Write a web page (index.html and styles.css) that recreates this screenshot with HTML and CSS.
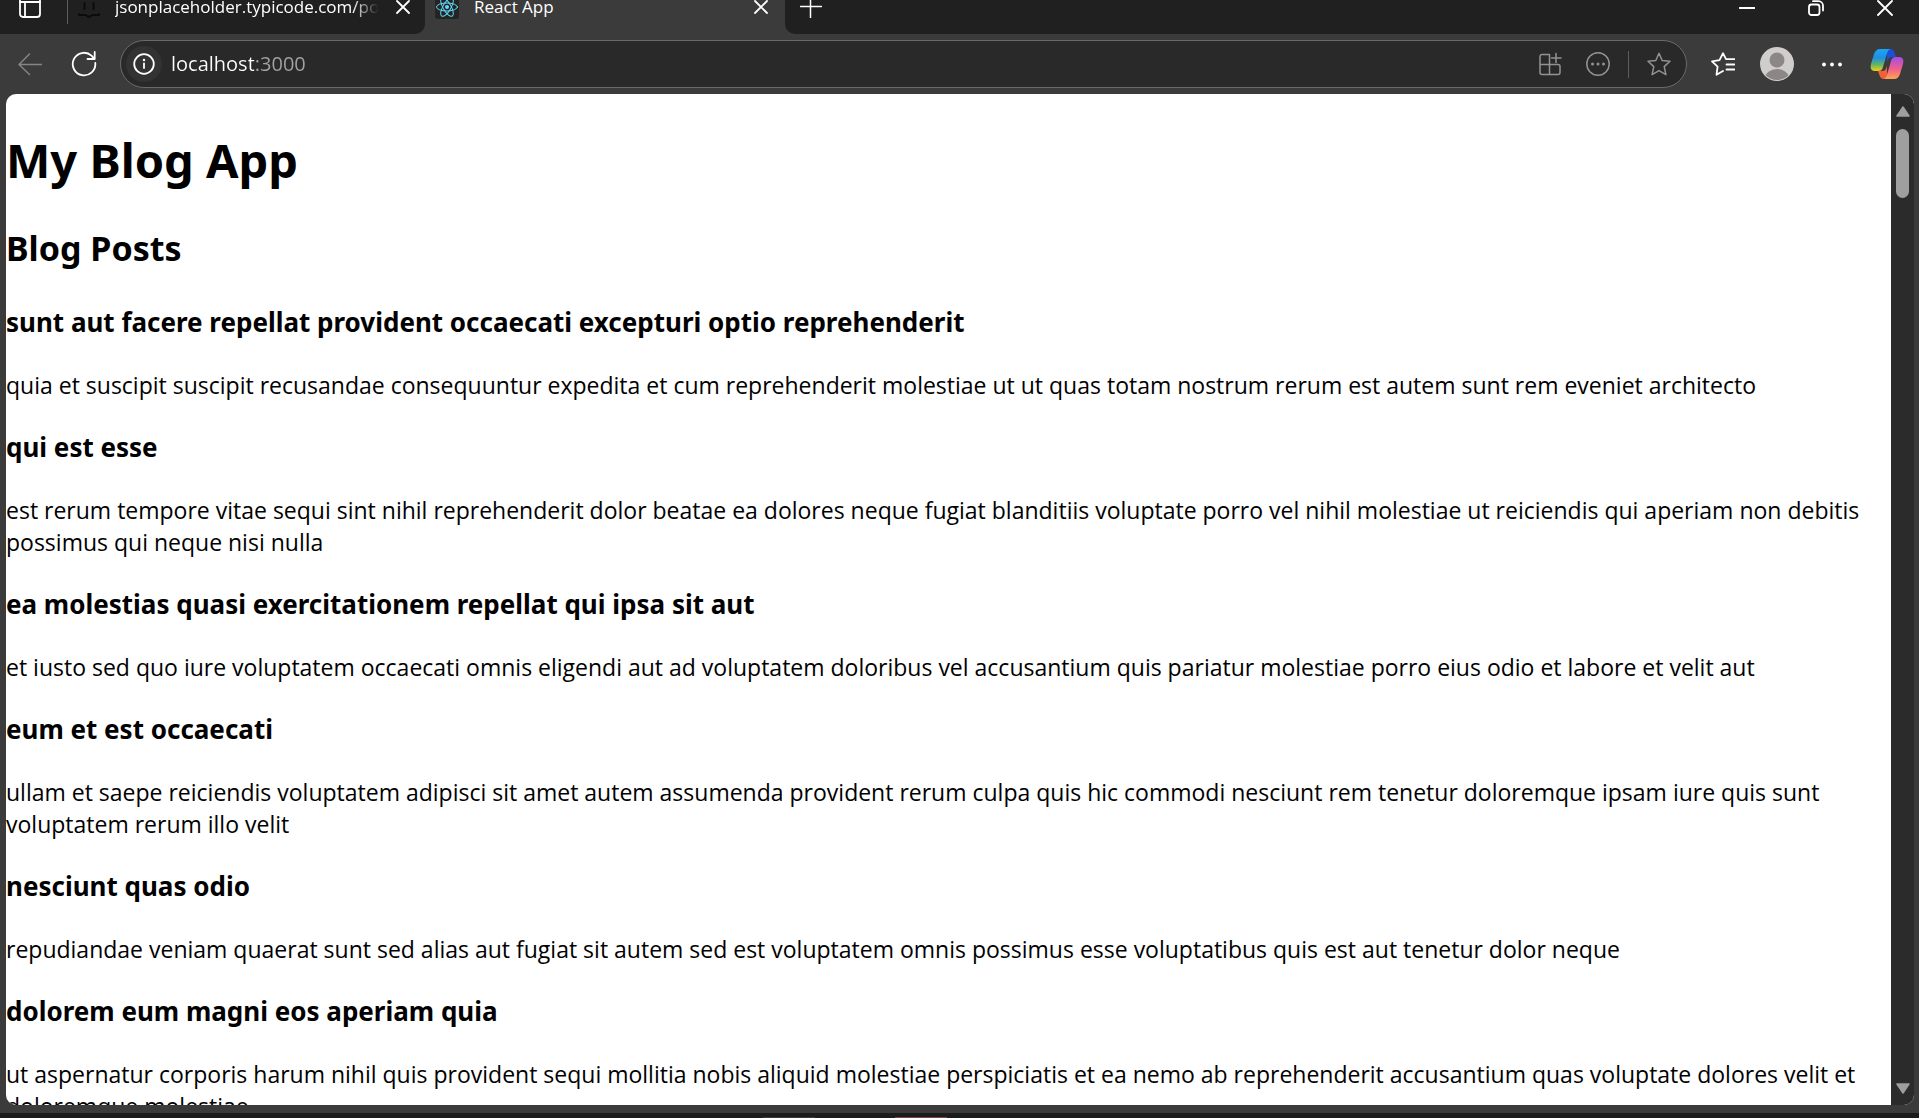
FILE: index.html
```html
<!DOCTYPE html>
<html lang="en">
<head>
<meta charset="utf-8">
<title>React App</title>
<link rel="stylesheet" href="styles.css">
</head>
<body>
<header class="tab-strip">
  <div class="strip-left">
    <button class="icon-button tab-menu" aria-label="Tab actions">
      <svg width="22" height="22" viewBox="0 0 22 22"><rect class="bold" x="1" y="1" width="20" height="20" rx="3"/><path class="bold" d="M1 6H21M6 6V21"/></svg>
    </button>
    <div class="tab tab-idle">
      <svg class="favicon" width="22" height="22" viewBox="0 0 22 22"><path class="face" d="M1 3v-2h5M16 1h5v2M6.500 7v6M15.500 7v6M1 18v1h7M9 20l2 1 2-1M14 19h7v-1"/></svg>
      <span class="tab-title tab-title-fade">jsonplaceholder.typicode.com/posts</span>
      <button class="icon-button tab-close" aria-label="Close tab">
        <svg width="14" height="14" viewBox="0 0 14 14"><path class="bold" d="M1 1 13 13M13 1 1 13"/></svg>
      </button>
    </div>
  </div>
  <div class="tab tab-active">
    <svg class="favicon react" width="24" height="24" viewBox="0 0 24 24"><rect class="tile" width="24" height="24" rx="3"/><g class="orbit"><ellipse cx="12" cy="12" rx="10.500" ry="4"/><ellipse cx="12" cy="12" rx="10.500" ry="4" transform="rotate(60 12 12)"/><ellipse cx="12" cy="12" rx="10.500" ry="4" transform="rotate(120 12 12)"/></g><circle class="core" cx="12" cy="12" r="2"/></svg>
    <span class="tab-title">React App</span>
    <button class="icon-button tab-close" aria-label="Close tab">
      <svg width="14" height="14" viewBox="0 0 14 14"><path class="bold" d="M1 1 13 13M13 1 1 13"/></svg>
    </button>
  </div>
  <div class="strip-right">
    <button class="icon-button new-tab" aria-label="New tab">
      <svg width="22" height="22" viewBox="0 0 22 22"><path d="M0.500 10.500H21.500M10.500 0.500V21.500"/></svg>
    </button>
    <div class="window-controls">
      <button class="icon-button" aria-label="Minimize"><svg width="16" height="16" viewBox="0 0 16 16"><path class="bold" d="M0.500 8H15.500"/></svg></button>
      <button class="icon-button" aria-label="Restore"><svg width="16" height="16" viewBox="0 0 16 16"><rect class="bold" x="1" y="4.500" width="10.500" height="10.500" rx="2.500"/><path class="bold" d="M5 1.200H10.500A4.500 4.500 0 0 1 15 5.700V10.500"/></svg></button>
      <button class="icon-button" aria-label="Close"><svg width="16" height="16" viewBox="0 0 16 16"><path class="bold" d="M1 1 15 15M15 1 1 15"/></svg></button>
    </div>
  </div>
</header>

<nav class="toolbar" aria-label="Browser toolbar">
  <button class="icon-button back" aria-label="Back" disabled>
    <svg width="24" height="24" viewBox="0 0 24 24"><path d="M11.500 2 1 12.500 11.500 22.500M1 12.500H24"/></svg>
  </button>
  <button class="icon-button reload" aria-label="Refresh">
    <svg width="26" height="26" viewBox="0 0 26 26"><path class="bold" d="M24.300 12A11.300 11.300 0 1 1 20.500 4.600L23.500 8M23.700 1V8H16.500"/></svg>
  </button>
  <form class="address">
    <button type="button" class="icon-button site-info" aria-label="Site information">
      <svg width="22" height="22" viewBox="0 0 22 22"><circle class="bold" cx="11" cy="11" r="9.800"/><path class="bold" d="M11 10.500V15"/><circle class="dots" cx="11" cy="7" r="1.200"/></svg>
    </button>
    <input class="url" type="text" value="localhost:3000" aria-label="Address">
    <button type="button" class="icon-button dim" aria-label="Install app">
      <svg width="24" height="24" viewBox="0 0 24 24"><path d="M11.500 2.500H4A2 2 0 0 0 2 4.500V20.500A2 2 0 0 0 4 22.500H20A2 2 0 0 0 22 20.500V14.500A2 2 0 0 0 20 12.500H2M11.500 2.500V22.500M18 1.500V10.500M13.500 6H23"/></svg>
    </button>
    <button type="button" class="icon-button dim" aria-label="More actions">
      <svg width="24" height="24" viewBox="0 0 24 24"><circle cx="12" cy="12" r="11.200"/><g class="dots"><circle cx="6.500" cy="12" r="1.500"/><circle cx="12" cy="12" r="1.500"/><circle cx="17.500" cy="12" r="1.500"/></g></svg>
    </button>
    <span class="divider"></span>
    <button type="button" class="icon-button dim" aria-label="Add to favorites">
      <svg width="24" height="24" viewBox="0 0 24 24"><path d="M12 1.200 15.200 8.500 23 9.300 17.200 14.600 18.900 22.600 12 18.700 5.100 22.600 6.800 14.600 1 9.300 8.800 8.500Z"/></svg>
    </button>
  </form>
  <div class="actions">
    <button class="icon-button" aria-label="Favorites">
      <svg width="24" height="24" viewBox="0 0 24 24"><path class="bold" d="M12 19 5.500 22.800 6.600 14.600 1 9.300 8.500 8.200 12 1.200 15 7.200H23.500M15.500 12.500H23.500M15.500 17.500H23.500"/></svg>
    </button>
    <button class="icon-button" aria-label="Profile">
      <svg width="34" height="34" viewBox="0 0 34 34"><defs><clipPath id="disc"><circle cx="17" cy="17" r="16"/></clipPath></defs><circle class="avatar-bg" cx="17" cy="17" r="17"/><circle class="avatar-fg" cx="17" cy="13" r="7.500"/><ellipse class="avatar-fg" cx="17" cy="31" rx="12" ry="9" clip-path="url(#disc)"/></svg>
    </button>
    <button class="icon-button" aria-label="Settings and more">
      <svg width="26" height="24" viewBox="0 0 26 24"><g class="dots"><circle cx="5" cy="12.500" r="1.900"/><circle cx="13" cy="12.500" r="1.900"/><circle cx="21" cy="12.500" r="1.900"/></g></svg>
    </button>
    <button class="icon-button" aria-label="Copilot">
      <svg class="copilot" width="34" height="30" viewBox="0 0 34 30"><defs>
        <linearGradient id="cool" x1="0" y1="0" x2="0" y2="1"><stop offset="0" stop-color="#1aa5f5"/><stop offset=".4" stop-color="#1f8fe0"/><stop offset=".7" stop-color="#5fb56a"/><stop offset="1" stop-color="#f5cf10"/></linearGradient>
        <linearGradient id="warm" x1="0" y1="0" x2="0" y2="1"><stop offset="0" stop-color="#a64be8"/><stop offset=".55" stop-color="#f0608a"/><stop offset="1" stop-color="#ffa552"/></linearGradient></defs>
        <path fill="#1a50d8" d="M17 0H20C23 0 24 2 25 5L26 8H22C19 8 18 10 17 13Z"/>
        <path fill="#f0603a" d="M17 30H14C11 30 10 28 9 25L8 22H12C15 22 16 20 17 17Z"/>
        <path fill="url(#cool)" d="M10 0H21C18.500 0 17.500 2 16.500 6L13 18C12 21 11 22 8 22H5C1 22 0 19 1 15L4 5C5 2 7 0 10 0Z"/>
        <path fill="url(#warm)" d="M24 30H13C15.500 30 16.500 28 17.500 24L21 12C22 9 23 8 26 8H29C33 8 34 11 33 15L30 25C29 28 27 30 24 30Z"/>
      </svg>
    </button>
  </div>
</nav>

<div class="page-frame">
  <main class="page">
    <h1>My Blog App</h1>
    <h2>Blog Posts</h2>
    <article><h3>sunt aut facere repellat provident occaecati excepturi optio reprehenderit</h3>
    <p>quia et suscipit suscipit recusandae consequuntur expedita et cum reprehenderit molestiae ut ut quas totam nostrum rerum est autem sunt rem eveniet architecto</p></article>
    <article><h3>qui est esse</h3>
    <p>est rerum tempore vitae sequi sint nihil reprehenderit dolor beatae ea dolores neque fugiat blanditiis voluptate porro vel nihil molestiae ut reiciendis qui aperiam non debitis possimus qui neque nisi nulla</p></article>
    <article><h3>ea molestias quasi exercitationem repellat qui ipsa sit aut</h3>
    <p>et iusto sed quo iure voluptatem occaecati omnis eligendi aut ad voluptatem doloribus vel accusantium quis pariatur molestiae porro eius odio et labore et velit aut</p></article>
    <article><h3>eum et est occaecati</h3>
    <p>ullam et saepe reiciendis voluptatem adipisci sit amet autem assumenda provident rerum culpa quis hic commodi nesciunt rem tenetur doloremque ipsam iure quis sunt voluptatem rerum illo velit</p></article>
    <article><h3>nesciunt quas odio</h3>
    <p>repudiandae veniam quaerat sunt sed alias aut fugiat sit autem sed est voluptatem omnis possimus esse voluptatibus quis est aut tenetur dolor neque</p></article>
    <article><h3>dolorem eum magni eos aperiam quia</h3>
    <p>ut aspernatur corporis harum nihil quis provident sequi mollitia nobis aliquid molestiae perspiciatis et ea nemo ab reprehenderit accusantium quas voluptate dolores velit et doloremque molestiae</p></article>
  </main>
  <div class="scrollbar">
    <button class="icon-button" aria-label="Scroll up"><svg width="14" height="11" viewBox="0 0 14 11"><path class="arrow" d="M7 1 13 10H1Z"/></svg></button>
    <div class="track"><div class="thumb"></div></div>
    <button class="icon-button" aria-label="Scroll down"><svg width="14" height="11" viewBox="0 0 14 11"><path class="arrow" d="M1 1H13L7 10Z"/></svg></button>
  </div>
</div>
<footer class="taskbar"><span class="task"></span><span class="task task-alert"></span></footer>
</body>
</html>
```
FILE: styles.css
```css
* { box-sizing: border-box; }

body {
  margin: 0;
  height: 100vh;
  display: flex;
  flex-direction: column;
  overflow: hidden;
  background: #3b3b3b;
  font-family: "Open Sans", "Noto Sans", sans-serif;
}

.icon-button {
  display: flex;
  align-items: center;
  justify-content: center;
  flex: none;
  padding: 0;
  border: 0;
  background: none;
  color: #fff;
}

svg {
  flex: none;
  fill: none;
  stroke: currentColor;
  stroke-width: 1.5;
  stroke-linecap: round;
  stroke-linejoin: round;
}

.bold { stroke-width: 1.8; }
.dots { fill: currentColor; stroke: none; }

/* Tab strip, its upper part off the top of the window */
.tab-strip {
  flex: none;
  display: flex;
  height: 54px;
  margin-top: -20px;
  color: #fff;
}

.strip-left,
.strip-right {
  display: flex;
  align-items: center;
  background: #202020;
}

.strip-left { border-bottom-right-radius: 10px; }
.strip-right {
  flex: 1;
  justify-content: space-between;
  border-bottom-left-radius: 10px;
}

.tab-menu { width: 60px; }

.tab {
  display: flex;
  align-items: center;
  height: 54px;
}

.tab-idle {
  width: 358px;
  height: 34px;
  margin-left: 7px;
  padding: 0 8px 0 10px;
  gap: 15px;
  border-left: 1px solid #5c5c5c;
}

.tab-active {
  width: 360px;
  padding: 0 10px;
  gap: 15px;
}

.favicon { color: #0c0c0c; }
.face { stroke-width: 2; }
.tile { fill: #242424; stroke: none; }
.orbit { stroke: #61dafb; stroke-width: 1; }
.core { fill: #61dafb; stroke: none; }

.tab-title {
  flex: 1;
  overflow: hidden;
  white-space: nowrap;
  font-size: 17px;
  line-height: 24px;
}

.tab-title-fade {
  margin-right: -10px;
  mask-image: linear-gradient(to right, #000 88%, transparent 98%);
}
.tab-close { width: 28px; height: 28px; }
.new-tab { width: 52px; }
.window-controls { display: flex; padding-top: 2px; }
.window-controls .icon-button { width: 69px; height: 34px; }

/* Toolbar */
.toolbar {
  flex: none;
  display: flex;
  align-items: center;
  height: 60px;
  padding: 0 15px 0 18px;
}

.back { width: 24px; color: #858585; }
.reload { width: 26px; margin: 0 23px 0 29px; }

.address {
  flex: 1;
  display: flex;
  align-items: center;
  height: 48px;
  padding: 0 15px 0 5px;
  gap: 24px;
  border: 1px solid #6a6a6a;
  border-radius: 24px;
  background: #292929;
}

.site-info {
  width: 36px;
  height: 36px;
  margin-right: -15px;
  border-radius: 18px;
  background: #333;
}

.url {
  flex: 1;
  min-width: 0;
  padding: 0;
  border: 0;
  outline: 0;
  font: 20px/28px "Open Sans", "Noto Sans", sans-serif;
  color: transparent;
  background: linear-gradient(to right, #fff 83px, #a3a3a3 83px);
  background-clip: text;
}

.dim { color: #929292; }
.divider { width: 1px; height: 27px; margin: 0 -6px; background: #5c5c5c; }

.actions {
  display: flex;
  align-items: center;
  gap: 25px;
  margin-left: 24px;
}

.avatar-bg { fill: #d0cecb; stroke: none; }
.avatar-fg { fill: #8b8784; stroke: none; }
.copilot { stroke: none; }

/* Page and scrollbar */
.page-frame {
  flex: 1;
  min-height: 0;
  display: flex;
  margin: 0 5px 0 6px;
  border-radius: 10px;
  overflow: hidden;
  background: #fff;
}

.page {
  flex: 1;
  overflow: hidden;
  color: #000;
}

h1, h2, h3, p { margin: 0; }
h1, h2, h3 { font-family: "Noto Sans", "Open Sans", sans-serif; }
h1 { margin-top: 34px; font-size: 47px; line-height: 64px; }
h2 { margin: 32px 0; font-size: 34px; line-height: 48px; }
h3 { margin-top: 28px; font-size: 26px; line-height: 37px; }
p { margin-top: 28px; font-size: 23px; line-height: 32px; }

.scrollbar {
  flex: none;
  display: flex;
  flex-direction: column;
  width: 23px;
  padding: 12px 0 11px;
  background: #2b2b2b;
}

.arrow { fill: #9f9f9f; stroke: #9f9f9f; }
.track { flex: 1; padding: 12px 5px; }
.thumb { height: 69px; border-radius: 7px; background: #9f9f9f; }

.taskbar {
  flex: none;
  display: flex;
  align-items: flex-end;
  justify-content: center;
  gap: 80px;
  height: 5px;
  margin-top: 8px;
  padding-right: 209px;
  background: #1c1c1c;
}

.task { width: 52px; height: 1px; background: #3a3a3a; }
.task-alert { background: #7c4248; }
```
